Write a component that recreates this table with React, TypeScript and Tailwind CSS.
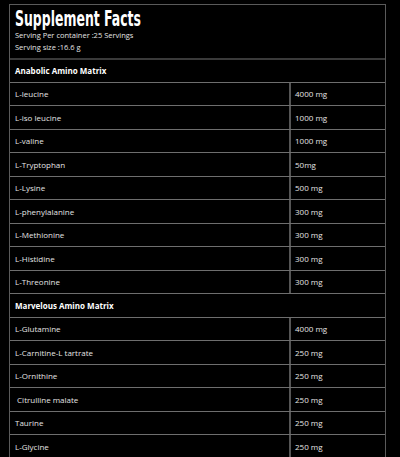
import React from "react";

type Row = { name: string; amount?: string; section?: boolean };

const rows: Row[] = [
  { name: "L-leucine", amount: "4000 mg" },
  { name: "L-iso leucine", amount: "1000 mg" },
  { name: "L-valine", amount: "1000 mg" },
  { name: "L-Tryptophan", amount: "50mg" },
  { name: "L-Lysine", amount: "500 mg" },
  { name: "L-phenylalanine", amount: "300 mg" },
  { name: "L-Methionine", amount: "300 mg" },
  { name: "L-Histidine", amount: "300 mg" },
  { name: "L-Threonine", amount: "300 mg" },
  { name: "Marvelous Amino Matrix", section: true },
  { name: "L-Glutamine", amount: "4000 mg" },
  { name: "L-Carnitine-L tartrate", amount: "250 mg" },
  { name: "L-Ornithine", amount: "250 mg" },
  { name: " Citrulline malate", amount: "250 mg" },
  { name: "Taurine", amount: "250 mg" },
  { name: "L-Glycine", amount: "250 mg" },
  { name: "", amount: "" },
];

const body = { fontFamily: '"Open Sans", "Liberation Sans", sans-serif' };

export default function App() {
  return (
    <div className="w-[400px] h-[457px] overflow-hidden bg-black pt-[4px] pl-[9px]">
      <div className="w-[377px] border border-[#5a5a5a] text-[#e4e4e4]" style={body}>
        {/* Header */}
        <div className="h-[55px] border-b-2 border-[#3a3a3a] pl-[5px] pt-[3px]">
          <h1
            className="text-[22px] leading-[22px] font-bold text-white origin-left scale-x-[0.63] whitespace-nowrap"
            style={{ fontFamily: '"Liberation Sans Narrow", "DejaVu Sans Condensed", sans-serif' }}
          >
            Supplement Facts
          </h1>
          <p className="text-[7.5px] leading-[10px]">Serving Per container :25 Servings</p>
          <p className="text-[7.5px] leading-[10px] mt-[2px]">Serving size :16.6 g</p>
        </div>

        <div className="h-[22.8px] border-b border-[#6e6e6e] pl-[5px] flex items-center">
          <span className="text-[8px] font-bold text-white">Anabolic Amino Matrix</span>
        </div>

        {rows.map((r, i) =>
          r.section ? (
            <div key={i} className="h-[23.5px] border-b border-[#6e6e6e] pl-[5px] flex items-center">
              <span className="text-[8px] font-bold text-white">{r.name}</span>
            </div>
          ) : (
            <div key={i} className="h-[23.5px] border-b border-[#6e6e6e] flex">
              <div className="w-[281px] border-r-2 border-[#555] pl-[5px] flex items-center text-[8px] whitespace-pre">
                {r.name}
              </div>
              <div className="flex-1 pl-[4px] flex items-center text-[8px]">{r.amount}</div>
            </div>
          )
        )}
      </div>
    </div>
  );
}
